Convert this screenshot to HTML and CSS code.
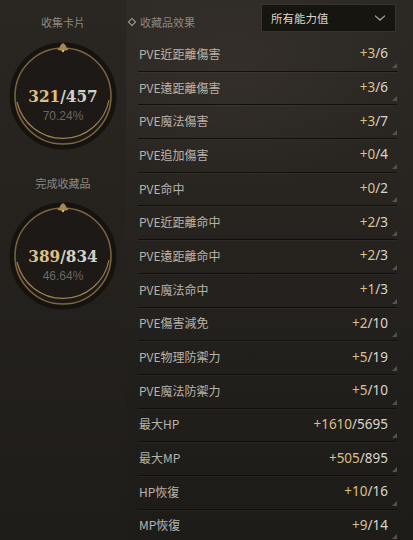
FILE: index.html
```html
<!DOCTYPE html>
<html lang="zh-Hant">
<head>
    <meta charset="UTF-8">
    <meta name="viewport" content="width=device-width, initial-scale=1.0">
    <title>收藏品效果</title>
    <link rel="stylesheet" href="styles.css">
</head>
<body>
    <div class="panel">
        <div class="side">
            <div class="side-title">收集卡片</div>
            <div class="ring">
                <svg class="ring-art" width="112" height="112" viewBox="0 0 112 112">
                    <circle cx="56" cy="56" r="51" fill="none" stroke="#15120f" stroke-width="5"/>
                    <circle cx="56" cy="56" r="48" fill="#1c1916" stroke="#7d6540" stroke-width="1.5"/>
                    <path d="M10 62 A47 47 0 0 0 102 60" fill="none" stroke="#c9a35c" stroke-width="1.2" opacity="0.75"/>
                    <path d="M56 3 C53 5 52 7 53 8 C51 8 50 9 51 10 L56 11 L61 10 C62 9 61 8 59 8 C60 7 59 5 56 3 Z" fill="#a48650"/>
                    <circle cx="56" cy="11" r="1.2" fill="#d8b877"/>
                </svg>
                <div class="ring-text">
                    <div class="count"><span class="gold">321</span>/457</div>
                    <div class="pct">70.24%</div>
                </div>
            </div>
            <div class="side-title second">完成收藏品</div>
            <div class="ring">
                <svg class="ring-art" width="112" height="112" viewBox="0 0 112 112">
                    <circle cx="56" cy="56" r="51" fill="none" stroke="#15120f" stroke-width="5"/>
                    <circle cx="56" cy="56" r="48" fill="#1c1916" stroke="#7d6540" stroke-width="1.5"/>
                    <path d="M10 62 A47 47 0 0 0 102 60" fill="none" stroke="#c9a35c" stroke-width="1.2" opacity="0.75"/>
                    <path d="M56 3 C53 5 52 7 53 8 C51 8 50 9 51 10 L56 11 L61 10 C62 9 61 8 59 8 C60 7 59 5 56 3 Z" fill="#a48650"/>
                    <circle cx="56" cy="11" r="1.2" fill="#d8b877"/>
                </svg>
                <div class="ring-text">
                    <div class="count"><span class="gold">389</span>/834</div>
                    <div class="pct">46.64%</div>
                </div>
            </div>
        </div>

        <div class="main">
            <div class="head">
                <div class="head-label"><span class="diamond"></span>收藏品效果</div>
                <div class="select">
                    <span>所有能力值</span>
                    <svg width="10" height="6" viewBox="0 0 10 6"><path d="M0 0 L5 4 L10 0 L10 1.5 L5 6 L0 1.5 Z" fill="#a09a8e"/></svg>
                </div>
            </div>
            <div class="rows">
                <div class="row"><span class="name">PVE近距離傷害</span><span class="val"><span class="gold">+3</span>/6</span></div>
                <div class="row"><span class="name">PVE遠距離傷害</span><span class="val"><span class="gold">+3</span>/6</span></div>
                <div class="row"><span class="name">PVE魔法傷害</span><span class="val"><span class="gold">+3</span>/7</span></div>
                <div class="row"><span class="name">PVE追加傷害</span><span class="val"><span class="gold">+0</span>/4</span></div>
                <div class="row"><span class="name">PVE命中</span><span class="val"><span class="gold">+0</span>/2</span></div>
                <div class="row"><span class="name">PVE近距離命中</span><span class="val"><span class="gold">+2</span>/3</span></div>
                <div class="row"><span class="name">PVE遠距離命中</span><span class="val"><span class="gold">+2</span>/3</span></div>
                <div class="row"><span class="name">PVE魔法命中</span><span class="val"><span class="gold">+1</span>/3</span></div>
                <div class="row"><span class="name">PVE傷害減免</span><span class="val"><span class="gold">+2</span>/10</span></div>
                <div class="row"><span class="name">PVE物理防禦力</span><span class="val"><span class="gold">+5</span>/19</span></div>
                <div class="row"><span class="name">PVE魔法防禦力</span><span class="val"><span class="gold">+5</span>/10</span></div>
                <div class="row"><span class="name">最大HP</span><span class="val"><span class="gold">+1610</span>/5695</span></div>
                <div class="row"><span class="name">最大MP</span><span class="val"><span class="gold">+505</span>/895</span></div>
                <div class="row"><span class="name">HP恢復</span><span class="val"><span class="gold">+10</span>/16</span></div>
                <div class="row"><span class="name">MP恢復</span><span class="val"><span class="gold">+9</span>/14</span></div>
            </div>
        </div>
    </div>
</body>
</html>
```

FILE: styles.css
```css
body {
    margin: 0;
    background: #1f1c19;
    font-family: "Noto Sans CJK TC", "Noto Sans", sans-serif;
    overflow: hidden;
}
.panel {
    display: flex;
    width: 413px;
    height: 540px;
    background:
        radial-gradient(ellipse 180px 120px at 230px 70px, rgba(70, 62, 54, 0.35), transparent),
        linear-gradient(180deg, #2d2925 0%, #282420 35%, #211f1c 70%, #1e1c19 100%);
}
.side {
    width: 126px;
    display: flex;
    flex-direction: column;
    align-items: center;
    background: linear-gradient(180deg, #2a2622 0%, #25221e 45%, #1f1d1a 100%);
}
.side-title {
    margin-top: 12px;
    height: 20px;
    font-size: 11px;
    line-height: 20px;
    color: #8d8981;
}
.side-title.second {
    margin-top: 21px;
}
.ring {
    position: relative;
    width: 112px;
    height: 112px;
    margin-top: 8px;
}
.side-title.second + .ring {
    margin-top: 7px;
}
.ring-art {
    display: block;
}
.ring-text {
    position: absolute;
    left: 0;
    right: 0;
    top: 44px;
    text-align: center;
}
.count {
    font-family: "DejaVu Serif", "Liberation Serif", serif;
    font-weight: bold;
    font-stretch: condensed;
    font-size: 17px;
    line-height: 24px;
    color: #d3d0c9;
}
.pct {
    font-family: "Liberation Sans", sans-serif;
    font-size: 12px;
    line-height: 16px;
    color: #6c6861;
}
.gold {
    color: #dcbf84;
}
.main {
    flex: 1;
    display: flex;
    flex-direction: column;
}
.head {
    height: 38px;
    flex: none;
    display: flex;
    align-items: flex-start;
    justify-content: space-between;
    padding-right: 17px;
}
.head-label {
    margin-top: 14px;
    font-size: 11px;
    line-height: 16px;
    color: #8d8981;
    display: flex;
    align-items: center;
}
.diamond {
    width: 4px;
    height: 4px;
    border: 1.5px solid #a8a294;
    transform: rotate(45deg);
    margin: 0 5px 0 3px;
}
.select {
    margin-top: 4px;
    width: 135px;
    height: 28px;
    box-sizing: border-box;
    border: 1px solid #38342e;
    background: #17150f;
    display: flex;
    align-items: center;
    justify-content: space-between;
    padding: 0 10px 0 9px;
    font-size: 11.5px;
    color: #d9d5cc;
}
.rows {
    margin-left: 12px;
    margin-right: 16px;
}
.row {
    position: relative;
    height: 33.7px;
    box-sizing: border-box;
    padding: 0 9px 2px 1px;
    display: flex;
    align-items: center;
    justify-content: space-between;
    border-bottom: 1px solid #110f0c;
    box-shadow: 0 1px 0 rgba(255, 255, 255, 0.035);
    font-size: 12px;
    color: #b7b3ab;
}
.row::after {
    content: "";
    position: absolute;
    right: 0;
    bottom: 3px;
    border-left: 5px solid transparent;
    border-bottom: 5px solid #56524b;
}
.val {
    font-family: "Noto Sans", sans-serif;
    font-size: 13.5px;
    color: #d9d5cc;
}
```
